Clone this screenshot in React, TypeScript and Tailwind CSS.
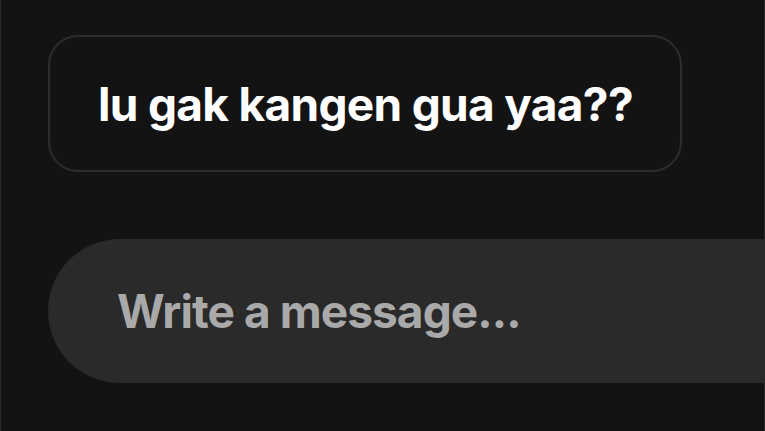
export default function App() {
  return (
    <div
      className="w-[765px] h-[431px] bg-[#131313] border-x border-[#2a2a2a] overflow-hidden flex flex-col pt-[35px] pl-[47px]"
      style={{ fontFamily: "Inter, 'Noto Sans', sans-serif" }}
    >
      {/* chat bubble */}
      <div className="self-start w-[634px] h-[137px] rounded-[30px] border-2 border-[#2c2c2c] flex items-center px-[48px]">
        <p className="text-white font-bold text-[46px] tracking-[-0.015em] leading-none whitespace-nowrap">
          lu gak kangen gua yaa??
        </p>
      </div>

      {/* composer */}
      <div className="mt-[67px] h-[144px] w-[760px] rounded-l-full bg-[#2a2a2a] flex items-center pl-[69px]">
        <span className="text-[#a9a9a9] font-bold text-[46px] tracking-[-0.02em] leading-none whitespace-nowrap">
          Write a message...
        </span>
      </div>
    </div>
  );
}
